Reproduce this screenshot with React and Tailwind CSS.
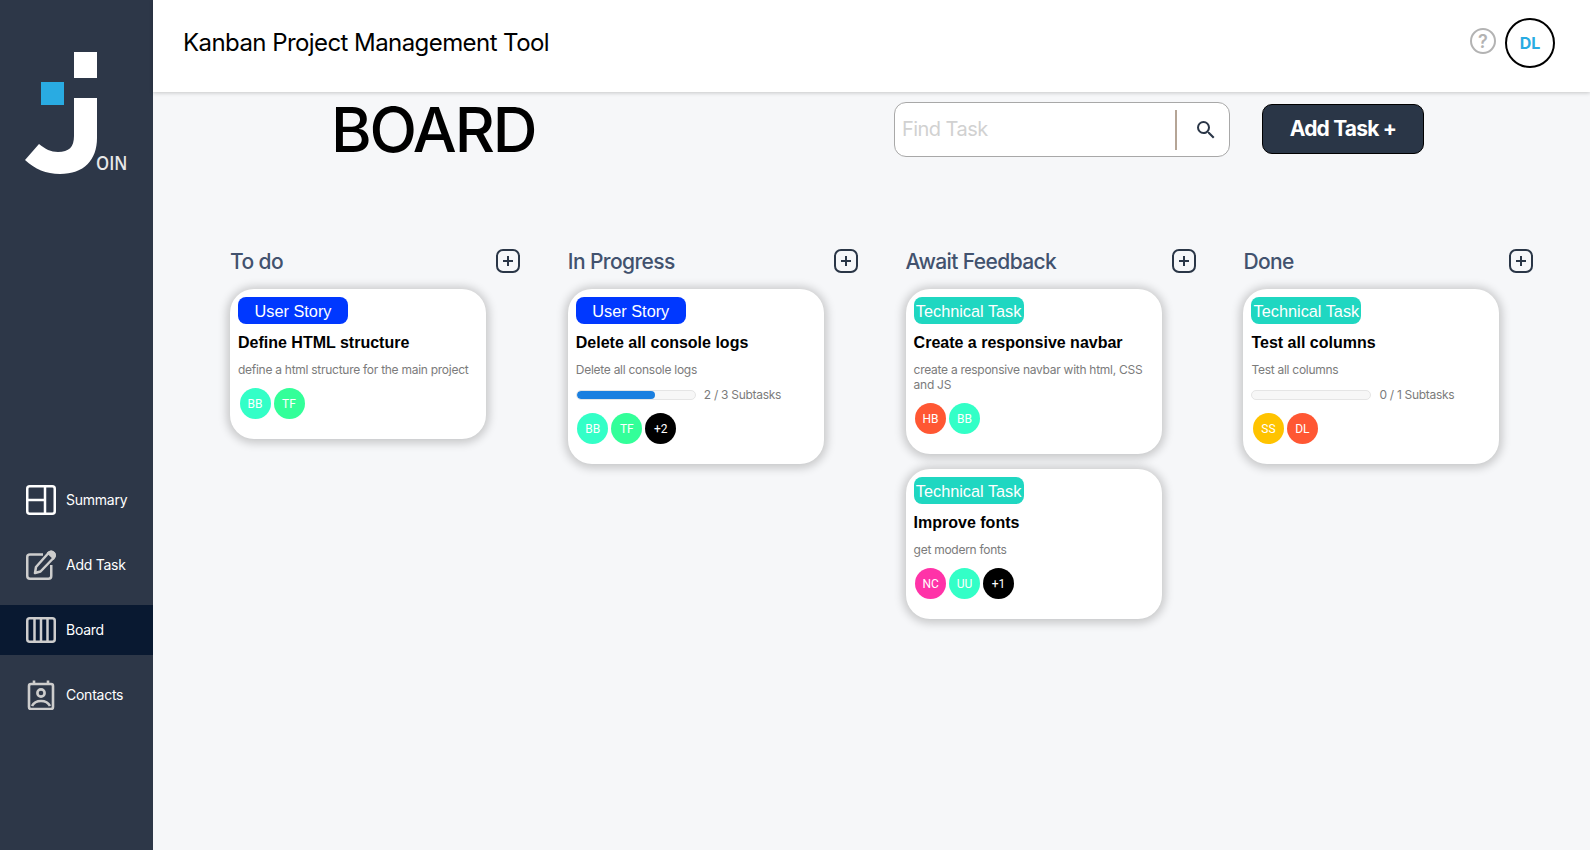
const inter = "font-['Inter',sans-serif]";
const arial = "font-['Liberation_Sans',sans-serif]";

const JoinLogo = () => (
  <div className="relative h-[180px] w-[153px]">
    <svg width="153" height="180" viewBox="0 0 153 180">
      <rect x="74" y="52" width="23" height="26" fill="#fff" />
      <rect x="41" y="82" width="23" height="23" fill="#29abe2" />
      <path d="M74 98H97V138C97 160 84 174 60 174C46 174 35 169 25 160L39 144C45 149 51 152 58 152C69 152 74 147 74 136Z" fill="#fff" />
    </svg>
    <span className="absolute left-[96px] top-[151px] origin-left scale-x-[0.88] font-['Open_Sans',sans-serif] text-[19px] leading-[24px] font-semibold text-[#e8e8e8]">OIN</span>
  </div>
);

const SummaryIcon = () => (
  <svg width="30" height="30" viewBox="0 0 30 30" fill="none" stroke="#fff" strokeWidth="2.5">
    <rect x="1.25" y="1.25" width="27.5" height="27.5" rx="2.5" />
    <path d="M19 1V29M1 15H19" />
  </svg>
);
const AddTaskIcon = () => (
  <svg width="30" height="30" viewBox="0 0 30 30" fill="none" stroke="#cdcdcd" strokeWidth="2.5">
    <path d="M17 4.5H4C2.5 4.5 1.25 5.5 1.25 7V26C1.25 27.5 2.5 28.7 4 28.7H22.5C24 28.7 25.25 27.5 25.25 26V15" />
    <path d="M10 17L9 23L14.5 21.5L27.5 8C29 6.5 29 4.5 27.5 3C26 1.5 24 1.5 22.5 3Z" fill="#2d3748" strokeLinejoin="round" />
    <path d="M22.5 3L27.5 8L28 7C29 6 29 4 27.5 2.8C26 1.5 24 1.5 22.5 3Z" fill="#cdcdcd" />
  </svg>
);
const BoardIcon = () => (
  <svg width="30" height="26" viewBox="0 0 30 26" fill="none" stroke="#cdcdcd" strokeWidth="2.5">
    <rect x="1.25" y="1.25" width="27.5" height="23.5" rx="2.5" />
    <path d="M8.5 1V25M15 1V25M21.5 1V25" />
  </svg>
);
const ContactsIcon = () => (
  <svg width="28" height="30" viewBox="0 0 28 30" fill="none" stroke="#cdcdcd" strokeWidth="2.6">
    <rect x="2" y="4" width="24" height="25" rx="2" />
    <path d="M7 0.5V4M21 0.5V4" />
    <circle cx="14" cy="13" r="3.6" />
    <path d="M5 26C7 22 10 21 14 21C18 21 21 22 23 26" />
  </svg>
);

const NavItem = ({ icon, label, active }) => (
  <div className={`flex h-[50px] items-center pl-[26px] ${active ? "bg-[#091931]" : ""}`}>
    <div className="flex w-[30px] justify-center">{icon}</div>
    <span className="mb-[2px] ml-[10px] text-[14px] tracking-[-0.25px] text-white">{label}</span>
  </div>
);

const Avatar = ({ text, color }) => (
  <div className={`flex h-[31px] w-[31px] items-center justify-center rounded-full font-['Roboto',sans-serif] text-[12px] text-white ${color}`}>
    {text}
  </div>
);

const PlusBox = () => (
  <svg width="24" height="24" viewBox="0 0 24 24" fill="none" stroke="#2a3647" strokeWidth="2">
    <rect x="1" y="1" width="22" height="22" rx="6" />
    <path d="M12 7V17M7 12H17" />
  </svg>
);

function Card({ task }) {
  const isStory = task.type === "User Story";
  return (
    <div className="w-[256px] rounded-[24px] bg-white px-[8px] pt-[8px] pb-[20px] shadow-[0_1px_10px_3px_rgba(0,0,0,0.2)]">
      <div className={`flex h-[27px] w-[110px] items-center justify-center rounded-[8px] pt-[2px] ${arial} text-[16.3px] whitespace-nowrap text-white ${isStory ? "bg-[#0038ff]" : "bg-[#1fd7c1]"}`}>
        {task.type}
      </div>
      <div className={`mt-[9px] ${arial} text-[16px] leading-[20px] font-bold text-black`}>{task.title}</div>
      <div className="mt-[9px] text-[12px] leading-[15px] tracking-[-0.27px] text-[#7b7b7b]">{task.desc}</div>
      {task.subtasks && (
        <div className="mt-[10px] flex h-[15px] items-center">
          <div className="h-[10px] w-[120px] overflow-hidden rounded-full border border-[#e5e5e5] bg-[#f7f7f7]">
            <div className="h-full rounded-full bg-[#1a7fe0]" style={{ width: `${task.subtasks.pct}%` }} />
          </div>
          <span className="ml-[8px] text-[12px] tracking-[-0.29px] text-[#7b7b7b]">{task.subtasks.label}</span>
        </div>
      )}
      <div className="mt-[11px] ml-[1.5px] flex gap-[3px]">
        {task.people.map((p) => (
          <Avatar key={p.text} text={p.text} color={p.color} />
        ))}
      </div>
    </div>
  );
}

const bb = { text: "BB", color: "bg-[#33ffc7]" };
const tf = { text: "TF", color: "bg-[#33ff99]" };

const columns = [
  {
    name: "To do",
    tasks: [
      { type: "User Story", title: "Define HTML structure", desc: "define a html structure for the main project", people: [bb, tf] },
    ],
  },
  {
    name: "In Progress",
    tasks: [
      {
        type: "User Story",
        title: "Delete all console logs",
        desc: "Delete all console logs",
        subtasks: { pct: 66, label: "2 / 3 Subtasks" },
        people: [bb, tf, { text: "+2", color: "bg-black" }],
      },
    ],
  },
  {
    name: "Await Feedback",
    tasks: [
      {
        type: "Technical Task",
        title: "Create a responsive navbar",
        desc: "create a responsive navbar with html, CSS and JS",
        people: [{ text: "HB", color: "bg-[#ff5733]" }, bb],
      },
      {
        type: "Technical Task",
        title: "Improve fonts",
        desc: "get modern fonts",
        people: [{ text: "NC", color: "bg-[#ff33a8]" }, { text: "UU", color: "bg-[#33ffc7]" }, { text: "+1", color: "bg-black" }],
      },
    ],
  },
  {
    name: "Done",
    tasks: [
      {
        type: "Technical Task",
        title: "Test all columns",
        desc: "Test all columns",
        subtasks: { pct: 0, label: "0 / 1 Subtasks" },
        people: [{ text: "SS", color: "bg-[#ffc300]" }, { text: "DL", color: "bg-[#ff5733]" }],
      },
    ],
  },
];

export default function App() {
  return (
    <div className={`flex h-[850px] overflow-hidden bg-[#f6f7f9] ${inter}`}>
      {/* sidebar */}
      <aside className="w-[153px] shrink-0 bg-[#2d3748]">
        <JoinLogo />
        <nav className="mt-[295px] flex flex-col gap-[15px]">
          <NavItem icon={<SummaryIcon />} label="Summary" />
          <NavItem icon={<AddTaskIcon />} label="Add Task" />
          <NavItem icon={<BoardIcon />} label="Board" active />
          <NavItem icon={<ContactsIcon />} label="Contacts" />
        </nav>
      </aside>

      <main className="flex-1">
        <header className="flex h-[92px] items-center justify-between bg-white pr-[35px] pb-[6px] pl-[30px] shadow-[0_1px_4px_rgba(0,0,0,0.2)]">
          <h1 className="text-[24px] font-normal tracking-[-0.57px] text-black">Kanban Project Management Tool</h1>
          <div className="flex items-center gap-[9px]">
            <div className="mb-[4px] flex h-[26px] w-[26px] items-center justify-center rounded-full border-[2.5px] border-[#b3b3b3] text-[18px] font-semibold text-[#b3b3b3]">?</div>
            <div className="flex h-[50px] w-[50px] items-center justify-center rounded-full border-2 border-black text-[16px] font-bold text-[#29abe2]">DL</div>
          </div>
        </header>

        {/* board toolbar */}
        <div className="mt-[10px] flex items-center pl-[178px]">
          <h2 className="w-[563px] text-[62px] leading-[55px] font-[550] tracking-[-2.1px] text-black">BOARD</h2>
          <div className="flex h-[55px] w-[336px] items-center rounded-[12px] border border-[#a8a8a8] bg-white pl-[7px]">
            <span className="mb-[2px] w-[273px] text-[20px] tracking-[-0.55px] text-[#d1d1d1]">Find Task</span>
            <div className="h-[40px] w-[2px] bg-[#b5a596]" />
            <svg className="ml-[17px]" width="24" height="24" viewBox="0 0 24 24" fill="#2a3647">
              <path d="M15.5 14h-.79l-.28-.27A6.47 6.47 0 0 0 16 9.5 6.5 6.5 0 1 0 9.5 16c1.61 0 3.09-.59 4.23-1.57l.27.28v.79l5 4.99L20.49 19l-4.99-5zm-6 0C7.01 14 5 11.99 5 9.5S7.01 5 9.5 5 14 7.01 14 9.5 11.99 14 9.5 14z" />
            </svg>
          </div>
          <button className="mb-[2px] ml-[32px] h-[50px] w-[162px] rounded-[10px] border border-black bg-[#2a3647] text-[21px] font-bold tracking-[-0.8px] text-white">Add Task +</button>
        </div>

        {/* columns */}
        <div className="mt-[91px] flex gap-[47.8px] pl-[77px]">
          {columns.map((col) => (
            <section key={col.name} className="w-[290px]">
              <div className="flex h-[26px] items-center justify-between">
                <h3 className="mt-[2px] text-[21px] font-medium tracking-[-0.6px] text-[#42526e]">{col.name}</h3>
                <PlusBox />
              </div>
              <div className="mt-[15px] flex flex-col gap-[15px]">
                {col.tasks.map((t) => (
                  <Card key={t.title} task={t} />
                ))}
              </div>
            </section>
          ))}
        </div>
      </main>
    </div>
  );
}
